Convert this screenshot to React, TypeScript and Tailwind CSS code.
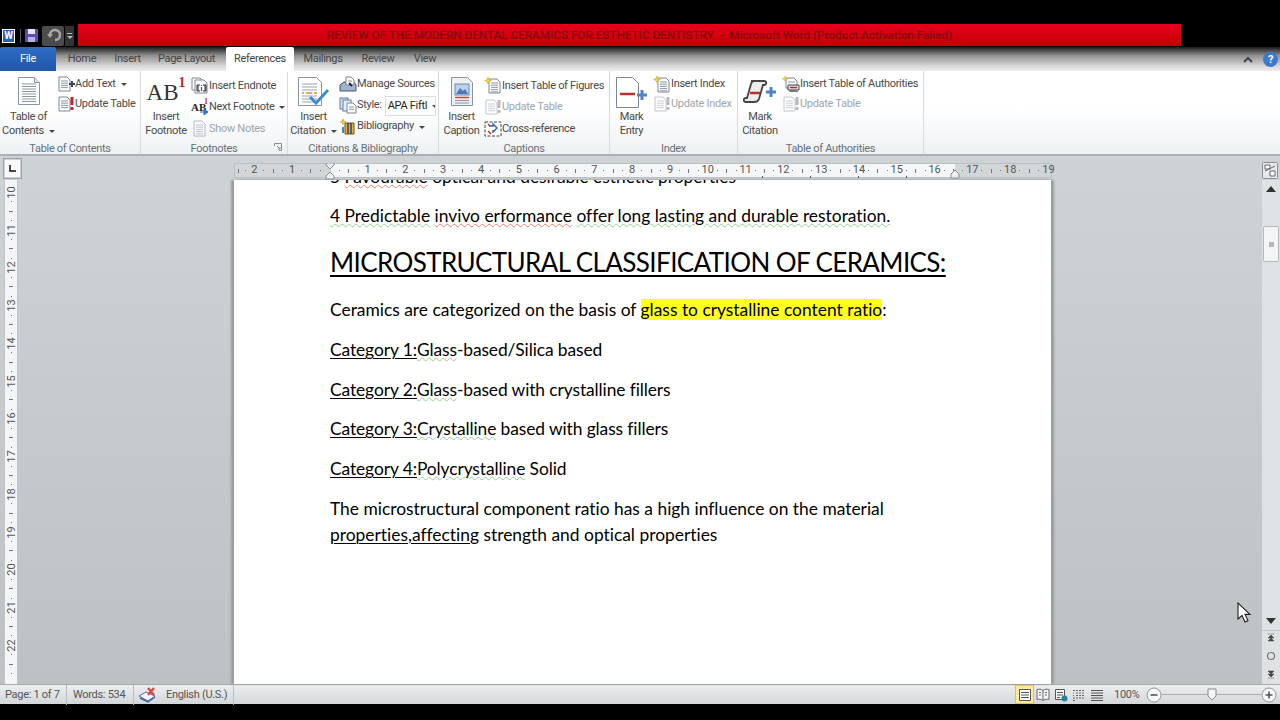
import type { ReactNode } from "react";

const ui = { fontFamily: 'Roboto, "Noto Sans", sans-serif' };
const doc = { fontFamily: 'Lato, "Liberation Sans", sans-serif' };

// small page shape used by most ribbon icons
const Page = ({ x = 2, y = 1, w = 10, h = 14, lines = 4 }) => (
  <g>
    <path d={`M${x} ${y}h${w - 3}l3 3v${h - 3}h-${w}z`} fill="#fdfdfd" stroke="#7d8794" />
    {Array.from({ length: lines }).map((_, i) => (
      <path key={i} d={`M${x + 2} ${y + 4 + i * 2.2}h${w - 4}`} stroke="#8d97a5" strokeWidth="1" />
    ))}
  </g>
);

const Svg = ({ size = 16, w, h, vb, children }: { size?: number; w?: number; h?: number; vb?: string; children: ReactNode }) => (
  <svg width={w ?? size} height={h ?? size} viewBox={vb ?? `0 0 ${w ?? size} ${h ?? size}`} className="shrink-0">
    {children}
  </svg>
);

const AddTextIcon = () => (
  <Svg w={18} h={16}>
    <Page w={11} />
    <path d="M12 8h6M15 5v6" stroke="#3a4656" strokeWidth="2" />
  </Svg>
);
const UpdateIcon = ({ off = false }) => (
  <Svg w={18} h={16}>
    <g opacity={off ? 0.45 : 1}>
      <Page w={11} />
      <path d="M15 1v8" stroke={off ? "#666" : "#c8261e"} strokeWidth="3" />
      <circle cx="15" cy="12.5" r="1.7" fill={off ? "#666" : "#c8261e"} />
    </g>
  </Svg>
);
const EndnoteIcon = () => (
  <Svg w={18} h={17}>
    <Page x={1} y={1} w={11} h={12} lines={0} />
    <Page x={4} y={3} w={12} h={13} lines={0} />
    <path d="M7 8v6M9 8h-3v6h3M14 8v6M12 8h3v6h-3" stroke="#333" fill="none" />
    <path d="M10.5 8v1M10.5 10v4" stroke="#2256a8" strokeWidth="1.2" />
  </Svg>
);
const NextFootnoteIcon = () => (
  <span className="relative w-[18px] h-[17px] shrink-0 text-[#222] font-bold tracking-normal" style={{ fontFamily: '"Liberation Serif", serif' }}>
    <span className="absolute left-0 top-[2px] text-[11px] leading-[12px]">AB</span>
    <span className="absolute left-[13px] top-[-1px] text-[8px] leading-[8px] text-[#c8261e]">1</span>
    <svg width="9" height="8" viewBox="0 0 9 8" className="absolute left-[9px] top-[9px]">
      <path d="M0 4h5M4 1l4 3-4 3z" fill="#3a72c4" stroke="#3a72c4" />
    </svg>
  </span>
);
const NotesIcon = () => (
  <Svg w={18} h={17}>
    <g opacity="0.55">
      <Page x={3} y={1} w={11} h={15} lines={5} />
    </g>
  </Svg>
);
const SourcesIcon = () => (
  <Svg w={18} h={17}>
    <path d="M1 9l4-3h10l2 3v6H1z" fill="#9fb3cc" stroke="#46566b" />
    <Page x={7} y={1} w={8} h={8} lines={1} />
    <path d="M10 7l3 3" stroke="#222" strokeWidth="2" />
  </Svg>
);
const StyleIcon = () => (
  <Svg w={18} h={17}>
    <rect x="1" y="1" width="8" height="11" fill="#d4e0ee" stroke="#5d7ea8" />
    <rect x="4" y="3" width="8" height="11" fill="#e6eef7" stroke="#5d7ea8" />
    <Page x={8} y={6} w={9} h={10} lines={2} />
  </Svg>
);
const BiblioIcon = () => (
  <Svg w={18} h={17}>
    <path d="M6 5h9v11H6z" fill="#e3b63a" stroke="#6e5512" />
    <path d="M9 5v11M12 5v11" stroke="#30406a" strokeWidth="1.5" />
    <path d="M4 1l.8 2 2 .8-2 .8L4 6.600l-.8-2-2-.8 2-.8z" fill="#f1d33b" stroke="#a98d13" strokeWidth=".5" />
    <path d="M3 9h2v6H3z" fill="#5d7ea8" />
  </Svg>
);
const StarDocIcon = () => (
  <Svg w={18} h={17}>
    <Page x={5} y={2} w={11} h={14} lines={5} />
    <path d="M4 0l1 2.500 2.500 1L5 4.500 4 7 3 4.500.5 3.500 3 2.500z" fill="#efd83c" stroke="#b89e1e" strokeWidth=".5" />
  </Svg>
);
const CrossRefIcon = () => (
  <Svg w={18} h={17}>
    <path d="M1 2h16v14H1z" fill="#fff" stroke="#444" strokeDasharray="3 1.500" />
    <path d="M5 6h4v-2l4 4-4 4v-2" fill="none" stroke="#2c62ad" strokeWidth="1.4" />
    <path d="M4 11l3 3M4 4l2 2" stroke="#c8261e" strokeWidth="1.4" />
  </Svg>
);
const AuthIcon = () => (
  <Svg w={18} h={17}>
    <Page x={4} y={2} w={11} h={10} lines={1} />
    <path d="M3 0l.8 2 2 .8-2 .8L3 5.600l-.8-2-2-.8 2-.8z" fill="#efd83c" stroke="#b89e1e" strokeWidth=".4" />
    <path d="M6 9h11v5H6z" fill="#dfe3e8" stroke="#444" />
    <path d="M8 11.500h7" stroke="#c8261e" strokeWidth="1.500" />
    <path d="M8 14l-1 2h9l-1-2" fill="#777" />
  </Svg>
);

const BigDoc = () => (
  <Svg w={24} h={30}>
    <path d="M1.500 1.500h16l5 5v22h-21z" fill="#fff" stroke="#8a94a2" />
    <path d="M17.500 1.500v5h5" fill="#dfe4ea" stroke="#8a94a2" />
    {[8, 10.500, 13, 15.500, 18, 20.500, 23, 25.500].map((y) => (
      <path key={y} d={`M5 ${y}h14`} stroke="#8d96a3" />
    ))}
  </Svg>
);
const BigAB = () => (
  <span className="flex items-start text-[#222] h-[30px] tracking-normal" style={{ fontFamily: '"Liberation Serif", serif' }}>
    <span className="text-[23px] leading-[23px] mt-[5px] text-[#333]">AB</span>
    <span className="text-[14px] leading-[14px] font-bold text-[#c8261e]">1</span>
  </span>
);
const BigCitation = () => (
  <Svg w={33} h={32}>
    <path d="M1.500 1.500h18l5 5v23h-23z" fill="#fff" stroke="#8a94a2" />
    {[8, 11, 14, 20, 23, 26].map((y) => (
      <path key={y} d={`M5 ${y}h15`} stroke="#9aa3af" />
    ))}
    <path d="M5 17h2M17 17h3M9 17h6" stroke="#d38f2a" strokeWidth="1.500" />
    <path d="M13 21l6 6L31 14" fill="none" stroke="#3f8fcf" strokeWidth="3" />
  </Svg>
);
const BigCaption = () => (
  <Svg w={24} h={31}>
    <path d="M1.500 1.500h16l5 5v23h-21z" fill="#eef0f3" stroke="#8a94a2" />
    <rect x="5" y="8" width="14" height="11" fill="#bcd2ec" stroke="#6d89ad" />
    <path d="M6 18l4-6 3 3 2-2 3 5z" fill="#4b79ba" />
    <path d="M5 21.500h14" stroke="#d8433a" strokeWidth="1.500" />
    <path d="M5 24.500h14M5 27h14" stroke="#8d96a3" />
  </Svg>
);
const BigMarkEntry = () => (
  <Svg w={34} h={32}>
    <path d="M1.500 1.500h16l6 6v24h-22z" fill="#fff" stroke="#7b8490" />
    <path d="M5 18h15" stroke="#b8332a" strokeWidth="2.500" />
    <path d="M27 14v10M22 19h10" stroke="#4f82c8" strokeWidth="3" />
  </Svg>
);
const BigMarkCitation = () => (
  <Svg w={34} h={28} vb="0 -3 34 28">
    <path d="M8 2h13c3 0 3 4 0 4h-1l-4 14c-1 3-3 3-5 3H3c-3 0-3-4 0-4h1L8 5c.5-2 1-3 3-3z" fill="#eceded" stroke="#444" strokeWidth="1.800" />
    <path d="M7 14h10" stroke="#b8332a" strokeWidth="2.500" />
    <path d="M28 8v10M23 13h10" stroke="#4f82c8" strokeWidth="3" />
  </Svg>
);

const Caret = () => <span className="ml-[5px] mt-[1px] border-x-[3px] border-t-[3px] border-x-transparent border-t-[#444] inline-block" />;

const Big = ({ icon, lines, w, caret = false }: { icon: ReactNode; lines: string[]; w: number; caret?: boolean }) => (
  <div className="flex flex-col items-center shrink-0 pt-[5px]" style={{ width: w }}>
    <div className="h-[34px] flex items-start justify-center">{icon}</div>
    {lines.map((l, i) => (
      <div key={l} className="h-[14px] leading-[14px] whitespace-nowrap flex items-center">
        {l}
        {caret && i === lines.length - 1 && <Caret />}
      </div>
    ))}
  </div>
);

const Small = ({ icon, label, off = false, caret = false, h = 21 }: { icon: ReactNode; label: string; off?: boolean; caret?: boolean; h?: number }) => (
  <div className={off ? "flex items-center text-[#a0a5ab]" : "flex items-center"} style={{ height: h }}>
    {icon}
    <span className="whitespace-nowrap">{label}</span>
    {caret && <Caret />}
  </div>
);

const Group = ({ w, label, children, launcher = false }: { w: number; label: string; children: ReactNode; launcher?: boolean }) => (
  <section className="relative flex flex-col h-full shrink-0 border-r border-[#d9dcdf]" style={{ width: w }}>
    <div className="flex h-[70px] shrink-0">{children}</div>
    <div className="h-[13px] leading-[15px] text-center text-[#66707a] whitespace-nowrap">{label}</div>
    {launcher && (
      <svg width="8" height="8" viewBox="0 0 8 8" className="absolute right-[5px] bottom-[3px]">
        <path d="M.5 3V.5H7.500V7.500H5M3 3l3 3M6 4v2H4" fill="none" stroke="#8a9098" />
      </svg>
    )}
  </section>
);

const Tab = ({ w, children }: { w: number; children: string }) => (
  <div className="h-[24px] leading-[24px] text-center text-[#444]" style={{ width: w }}>
    {children}
  </div>
);

const hNumbers = [2, 1, 0, 1, 2, 3, 4, 5, 6, 7, 8, 9, 10, 11, 12, 13, 14, 15, 16, 17, 18];
const vNumbers = [10, 11, 12, 13, 14, 15, 16, 17, 18, 19, 20, 21, 22];

const HorizontalRuler = () => (
  <div className="relative w-[818px] h-[15px] mt-[7px] shrink-0 border border-[#bcc0c4] text-[11px] tracking-normal text-[#555] bg-[linear-gradient(90deg,#d3d6d9_96px,#f5f6f7_96px,#f5f6f7_720px,#d3d6d9_720px)]">
    <div className="flex h-full">
      <div className="flex h-full w-[14.500px] shrink-0 items-center justify-around">
        <i className="w-[1px] h-[4px] bg-[#777]" />
        <i className="w-[1px] h-[1px] bg-[#777]" />
      </div>
      {hNumbers.map((n, i) => (
        <div key={i} className="flex h-full shrink-0 w-[37.800px] items-center">
          <span className="w-[9.450px] flex justify-center whitespace-nowrap">{n === 0 ? "" : n}</span>
          <span className="w-[9.450px] flex justify-center"><i className="w-[1px] h-[1px] bg-[#777]" /></span>
          <span className="w-[9.450px] flex justify-center"><i className="w-[1px] h-[4px] bg-[#777]" /></span>
          <span className="w-[9.450px] flex justify-center"><i className="w-[1px] h-[1px] bg-[#777]" /></span>
        </div>
      ))}
      <span className="h-full flex items-center whitespace-nowrap -ml-[1px]">19</span>
    </div>
    {/* indent markers */}
    <svg width="10" height="17" viewBox="0 0 10 17" className="absolute left-[90px] top-[-1px]">
      <path d="M1 0h8v2L5 6 1 2zM5 9l4 4v3H1v-3z" fill="#eceef0" stroke="#8b9096" />
    </svg>
    <svg width="10" height="9" viewBox="0 0 10 9" className="absolute left-[715px] top-[6px]">
      <path d="M5 0l4 4v4H1V4z" fill="#eceef0" stroke="#8b9096" />
    </svg>
    {[527, 575, 623, 671].map((x) => (
      <i key={x} className="absolute bottom-[-1px] w-[1px] h-[2px] bg-[#555]" style={{ left: x }} />
    ))}
  </div>
);

const VerticalRuler = () => (
  <div className="w-[14px] h-full ml-[4px] shrink-0 bg-[#f4f5f6] border-x border-[#c2c5c8] overflow-hidden text-[#555] text-[11px] tracking-normal">
    <div className="h-[7.600px]" />
    {vNumbers.map((n) => (
      <div key={n} className="w-full">
        <div className="h-[9.450px] flex items-center justify-center">
          <span className="-rotate-90 leading-none">{n}</span>
        </div>
        <div className="h-[9.450px] flex items-center justify-center"><i className="w-[1px] h-[1px] bg-[#777]" /></div>
        <div className="h-[9.450px] flex items-center justify-center"><i className="w-[4px] h-[1px] bg-[#777]" /></div>
        <div className="h-[9.450px] flex items-center justify-center"><i className="w-[1px] h-[1px] bg-[#777]" /></div>
      </div>
    ))}
  </div>
);

const Red = ({ children }: { children: string }) => <span className="underline decoration-wavy decoration-[#e0807a] decoration-1 underline-offset-1">{children}</span>;
const Green = ({ children }: { children: string }) => <span className="underline decoration-wavy decoration-[#98cc98] decoration-1 underline-offset-1">{children}</span>;
const Ul = ({ children }: { children: string }) => <span className="underline underline-offset-2 decoration-1">{children}</span>;

const P = ({ h, children, tight = false }: { h: number; children: ReactNode; tight?: boolean }) => (
  <div className={tight ? "whitespace-nowrap leading-[26px] tracking-[-0.1px]" : "whitespace-nowrap leading-[26px]"} style={{ height: h }}>{children}</div>
);

const Scrollbar = () => (
  <div className="w-[18px] h-full shrink-0 bg-[#dfe2e4] flex flex-col items-center">
    <svg width="10" height="6" viewBox="0 0 10 6" className="mt-[6px]"><path d="M5 0l5 6H0z" fill="#333" /></svg>
    <div className="mt-[34px] w-[16px] h-[36px] bg-[#f4f5f6] border border-[#b5b9bd] rounded-[2px] flex items-center justify-center">
      <i className="w-[5px] h-[5px] bg-[#b4b8bc]" />
    </div>
    <div className="flex-1" />
    <svg width="10" height="6" viewBox="0 0 10 6"><path d="M5 6l5-6H0z" fill="#333" /></svg>
    <div className="w-full border-t border-[#c5c8cb] mt-[6px] h-[54px] flex flex-col items-center pt-[2px] gap-[8px]">
      <svg width="10" height="10" viewBox="0 0 10 10"><path d="M2 1h6M5 2l3 3H2zM5 5l3 3H2z" fill="#444" stroke="#444" strokeWidth=".5" /></svg>
      <svg width="10" height="10" viewBox="0 0 10 10"><circle cx="5" cy="5" r="3.500" fill="none" stroke="#777" strokeWidth="1.200" /></svg>
      <svg width="10" height="10" viewBox="0 0 10 10"><path d="M2 9h6M5 8l3-3H2zM5 5l3-3H2z" fill="#444" stroke="#444" strokeWidth=".5" /></svg>
    </div>
  </div>
);

const Sep = () => <i className="w-[1px] h-[20px] bg-[#b9bcbf] shrink-0" />;

const ViewIcon = ({ kind }: { kind: number }) => (
  <svg width="14" height="14" viewBox="0 0 14 14">
    {kind === 0 && <path d="M1.500 1.500h11v11h-11zM3 4.500h8M3 7h8M3 9.500h8" fill="#fff" stroke="#555" />}
    {kind === 1 && <path d="M7 2.500C5 1 3 1 1 1.500v10c2-.5 4-.5 6 1 2-1.500 4-1.500 6-1v-10c-2-.5-4-.5-6 1zM7 2.500v10M3 4.500h2M3 7h2M9 4.500h2M9 7h2" fill="#f5f5f5" stroke="#666" />}
    {kind === 2 && (
      <>
        <path d="M1.500 1.500h9v10h-9zM3 4.500h6M3 7h6M3 9.500h3" fill="#f5f5f5" stroke="#555" />
        <circle cx="10.500" cy="10.500" r="3" fill="#25809a" />
      </>
    )}
    {kind === 3 && <path d="M1 2.500h12M4 5h9M4 7.500h9M1 10h12M1 12.500h2M1 5h1M1 7.500h1" stroke="#666" strokeDasharray="2 1" />}
    {kind === 4 && <path d="M1 2.500h12M1 5h12M1 7.500h12M1 10h12M1 12.500h12" stroke="#555" />}
  </svg>
);

const ZoomBtn = ({ plus = false }: { plus?: boolean }) => (
  <svg width="16" height="16" viewBox="0 0 16 16" className="shrink-0">
    <circle cx="8" cy="8" r="7" fill="#f6f7f8" stroke="#8f959b" />
    <path d={plus ? "M4.500 8h7M8 4.500v7" : "M4.500 8h7"} stroke="#555" strokeWidth="1.600" />
  </svg>
);

export default function App() {
  return (
    <div className="relative w-[1280px] h-[720px] bg-black overflow-hidden text-[11px] tracking-[-0.3px] text-[#4a4e54]" style={ui}>
      <div className="h-[24px]" />

      {/* title row */}
      <div className="h-[23px] flex items-start">
        <div className="w-[78px] h-[23px] flex items-center shrink-0">
          <span className="ml-[2px] w-[13px] h-[14px] bg-[#2a5fb5] border border-white text-white font-bold text-[10px] leading-[12px] text-center">W</span>
          <i className="ml-[5px] w-[1px] h-[14px] bg-[#555]" />
          <svg width="15" height="15" viewBox="0 0 15 15" className="ml-[3px]">
            <path d="M1 1h13v13H1z" fill="#5a4fb0" />
            <path d="M4 1h7v5H4z" fill="#e8e8f4" />
            <path d="M4 9h7v5H4z" fill="#b8b2e0" />
          </svg>
          <span className="ml-[3px] w-[22px] h-[20px] bg-[#4c4c4c] flex items-center justify-center rounded-[2px]">
            <svg width="15" height="15" viewBox="0 0 15 15">
              <path d="M4 7a5 5 0 115 5" fill="none" stroke="#a9a9a9" strokeWidth="2.500" />
              <path d="M1 6h6l-3 4z" fill="#a9a9a9" />
            </svg>
          </span>
          <span className="ml-[1px] w-[9px] h-[20px] bg-[#333] flex flex-col items-center justify-center gap-[2px]">
            <i className="w-[5px] h-[1px] bg-[#bbb]" />
            <i className="border-x-[3px] border-t-[3px] border-x-transparent border-t-[#bbb]" />
          </span>
        </div>
        <div className="w-[1103px] h-[22px] pl-[20px] bg-[linear-gradient(#e6001c,#c40000)] text-center font-medium tracking-normal text-[#860a10] text-[11.700px] leading-[23px] whitespace-pre">
          REVIEW OF THE MODERN DENTAL CERAMICS FOR ESTHETIC DENTISTRY  -  Microsoft Word (Product Activation Failed)
        </div>
      </div>

      {/* tabs */}
      <div className="h-[24px] flex items-center bg-[linear-gradient(#1a1a1a,#8f8f8f_35%,#d8d8d8_80%,#eeeeee)]">
        <div className="w-[56px] h-[24px] leading-[24px] text-center text-white bg-[linear-gradient(#2f6cc4,#1f57a8)] rounded-t-[2px]">File</div>
        <Tab w={52}>Home</Tab>
        <Tab w={39}>Insert</Tab>
        <Tab w={79}>Page Layout</Tab>
        <div className="w-[68px] h-[25px] self-start leading-[24px] text-center bg-white rounded-t-[2px] relative z-10 text-[#444]">References</div>
        <Tab w={58}>Mailings</Tab>
        <Tab w={52}>Review</Tab>
        <Tab w={42}>View</Tab>
        <div className="flex-1" />
        <svg width="10" height="7" viewBox="0 0 10 7" className="mr-[10px]"><path d="M1 6l4-4 4 4" fill="none" stroke="#444" strokeWidth="2" /></svg>
        <span className="w-[15px] h-[15px] mr-[2px] rounded-full bg-[#3c78cc] text-white font-bold leading-[15px] text-center">?</span>
      </div>

      {/* ribbon */}
      <div className="h-[85px] flex bg-[linear-gradient(#ffffff,#ffffff_45%,#eef1f3)] border-b-2 border-[#aeb1b4] text-[#4a4a4a]">
        <Group w={141} label="Table of Contents">
          <Big w={57} icon={<BigDoc />} lines={["Table of", "Contents"]} caret />
          <div className="pt-[3px]">
            <Small h={20} icon={<AddTextIcon />} label="Add Text" caret />
            <Small h={20} icon={<UpdateIcon />} label="Update Table" />
          </div>
        </Group>
        <Group w={147} label="Footnotes" launcher>
          <Big w={50} icon={<BigAB />} lines={["Insert", "Footnote"]} />
          <div className="pt-[4px]">
            <Small h={21.500} icon={<EndnoteIcon />} label="Insert Endnote" />
            <Small h={21.500} icon={<NextFootnoteIcon />} label="Next Footnote" caret />
            <Small h={21.500} off icon={<NotesIcon />} label="Show Notes" />
          </div>
        </Group>
        <Group w={151} label="Citations & Bibliography">
          <Big w={51} icon={<BigCitation />} lines={["Insert", "Citation"]} caret />
          <div className="pt-[3px]">
            <Small h={21} icon={<SourcesIcon />} label="Manage Sources" />
            <div className="flex items-center h-[21px]">
              <StyleIcon />
              <span>Style:</span>
              <span className="ml-[3px] w-[51px] h-[20px] leading-[18px] pl-[2px] bg-white border border-[#dcdfe2] flex items-center text-[#222] overflow-hidden whitespace-nowrap">
                APA Fiftl
                <Caret />
              </span>
            </div>
            <Small h={21} icon={<BiblioIcon />} label="Bibliography" caret />
          </div>
        </Group>
        <Group w={171} label="Captions">
          <Big w={45} icon={<BigCaption />} lines={["Insert", "Caption"]} />
          <div className="pt-[4px]">
            <Small h={21.500} icon={<StarDocIcon />} label="Insert Table of Figures" />
            <Small h={21.500} off icon={<UpdateIcon off />} label="Update Table" />
            <Small h={21.500} icon={<CrossRefIcon />} label="Cross-reference" />
          </div>
        </Group>
        <Group w={128} label="Index">
          <Big w={43} icon={<BigMarkEntry />} lines={["Mark", "Entry"]} />
          <div className="pt-[3px]">
            <Small h={20} icon={<StarDocIcon />} label="Insert Index" />
            <Small h={20} off icon={<UpdateIcon off />} label="Update Index" />
          </div>
        </Group>
        <Group w={186} label="Table of Authorities">
          <Big w={44} icon={<BigMarkCitation />} lines={["Mark", "Citation"]} />
          <div className="pt-[3px]">
            <Small h={20} icon={<AuthIcon />} label="Insert Table of Authorities" />
            <Small h={20} off icon={<UpdateIcon off />} label="Update Table" />
          </div>
        </Group>
      </div>

      {/* ruler row */}
      <div className="h-[24px] flex bg-[#cdd2d5]">
        <div className="w-[234px] shrink-0 pl-[3px] pt-[2px]">
          <div className="w-[19px] h-[21px] border border-[#9da2a6] p-[1px]">
            <div className="w-full h-full bg-[#f8f8f8] flex items-center justify-center">
              <svg width="7" height="7" viewBox="0 0 7 7"><path d="M1 0v6h6" fill="none" stroke="#111" strokeWidth="1.500" /></svg>
            </div>
          </div>
        </div>
        <HorizontalRuler />
        <div className="flex-1" />
        <div className="w-[18px] shrink-0 flex items-end bg-[#cdd2d5] pb-[1px]">
          <svg width="16" height="17" viewBox="0 0 16 17">
            <rect x=".5" y=".5" width="15" height="16" rx="1" fill="#e6e8ea" stroke="#8b9096" />
            <path d="M3 3h5v4H3zM8 9h5v5H8zM3 9l10-5" fill="#fff" stroke="#666" />
          </svg>
        </div>
      </div>

      {/* document area */}
      <div className="h-[504px] flex bg-[linear-gradient(#cdd2d5,#bdc1c3)]">
        <div className="w-[234px] h-full shrink-0">
          <VerticalRuler />
        </div>
        <div className="w-[817px] h-full shrink-0 bg-white overflow-hidden pl-[96px] text-black text-[17.400px] tracking-normal [font-variant-ligatures:none] shadow-[-3px_0_2px_#9a9da0,3px_0_2px_#9a9da0]" style={doc}>
          <div className="-mt-[16px]">
            <P h={39}>
              <span className="whitespace-pre">5 </span>
              <Red>Favourable</Red> optical and desirable esthetic properties
            </P>
            <P h={33}>
              <Green>4 Predictable</Green> <Red>invivo erformance</Red> <Green>offer long lasting and durable restoration.</Green>
            </P>
          </div>
          <div className="text-[26px] tracking-[-0.6px] leading-[40px] h-[61px] pt-[6px] whitespace-nowrap underline decoration-2 underline-offset-[3px]">
            MICROSTRUCTURAL CLASSIFICATION OF CERAMICS:
          </div>
          <P h={40}>
            Ceramics are categorized on the basis of <span className="bg-[#ffff20]">glass to crystalline content ratio</span>:
          </P>
          <P h={39.500} tight><Ul>Category 1:</Ul><Green>Glass</Green>-based/Silica based</P>
          <P h={39.500} tight><Ul>Category 2:</Ul><Green>Glass</Green>-based with crystalline fillers</P>
          <P h={40} tight><Ul>Category 3:</Ul><Green>Crystalline</Green> based with glass fillers</P>
          <P h={39.500} tight><Ul>Category 4:</Ul><Green>Polycrystalline</Green> Solid</P>
          <P h={26}>The microstructural component ratio has a high influence on the material</P>
          <P h={26}><Ul>properties,affecting</Ul> strength and optical properties</P>
        </div>
        <div className="flex-1" />
        <Scrollbar />
      </div>

      {/* status bar */}
      <div className="h-[20px] flex items-center bg-[linear-gradient(#eceef0,#d4d7d9)] border-t border-[#a7abae] text-[#555]">
        <span className="w-[66px] pl-[5px] pt-[1px] whitespace-nowrap">Page: 1 of 7</span>
        <Sep />
        <span className="w-[66px] pl-[6px] pt-[1px] whitespace-nowrap">Words: 534</span>
        <Sep />
        <svg width="20" height="17" viewBox="0 0 20 17" className="ml-[4px] shrink-0">
          <path d="M1 10l7-4 9 4-7 5z" fill="#f6f6f6" stroke="#4c6fa8" />
          <path d="M2 12l8 4 7-5" fill="none" stroke="#3d65a8" strokeWidth="1.500" />
          <path d="M10 2l6 7M16 2l-6 7" stroke="#d9443c" strokeWidth="2.200" />
        </svg>
        <span className="w-[75px] pl-[8px] pt-[1px] whitespace-nowrap">English (U.S.)</span>
        <Sep />
        <div className="flex-1" />
        <span className="w-[19px] h-[19px] bg-[#ffe99b] border border-[#e3c05a] flex items-center justify-center shrink-0"><ViewIcon kind={0} /></span>
        <span className="ml-[2px] flex gap-[4px] shrink-0">
          <ViewIcon kind={1} />
          <ViewIcon kind={2} />
          <ViewIcon kind={3} />
          <ViewIcon kind={4} />
        </span>
        <span className="ml-[10px] w-[32px] pt-[1px] whitespace-nowrap">100%</span>
        <ZoomBtn />
        <div className="relative w-[99px] h-[1px] bg-[#a9adb1] flex justify-center items-center">
          <svg width="10" height="13" viewBox="0 0 10 13" className="shrink-0"><path d="M1 1h8v7l-4 4-4-4z" fill="#f4f5f6" stroke="#868b90" /></svg>
        </div>
        <ZoomBtn plus />
        <div className="w-[3px]" />
      </div>

      {/* mouse pointer */}
      <svg width="15" height="21" viewBox="0 0 15 21" className="absolute left-[1237px] top-[602px]">
        <path d="M1 1v16l4-3.500 3 6.500 3-1.300-3-6.300h5z" fill="#fff" stroke="#222" strokeWidth="1.100" />
      </svg>
    </div>
  );
}
